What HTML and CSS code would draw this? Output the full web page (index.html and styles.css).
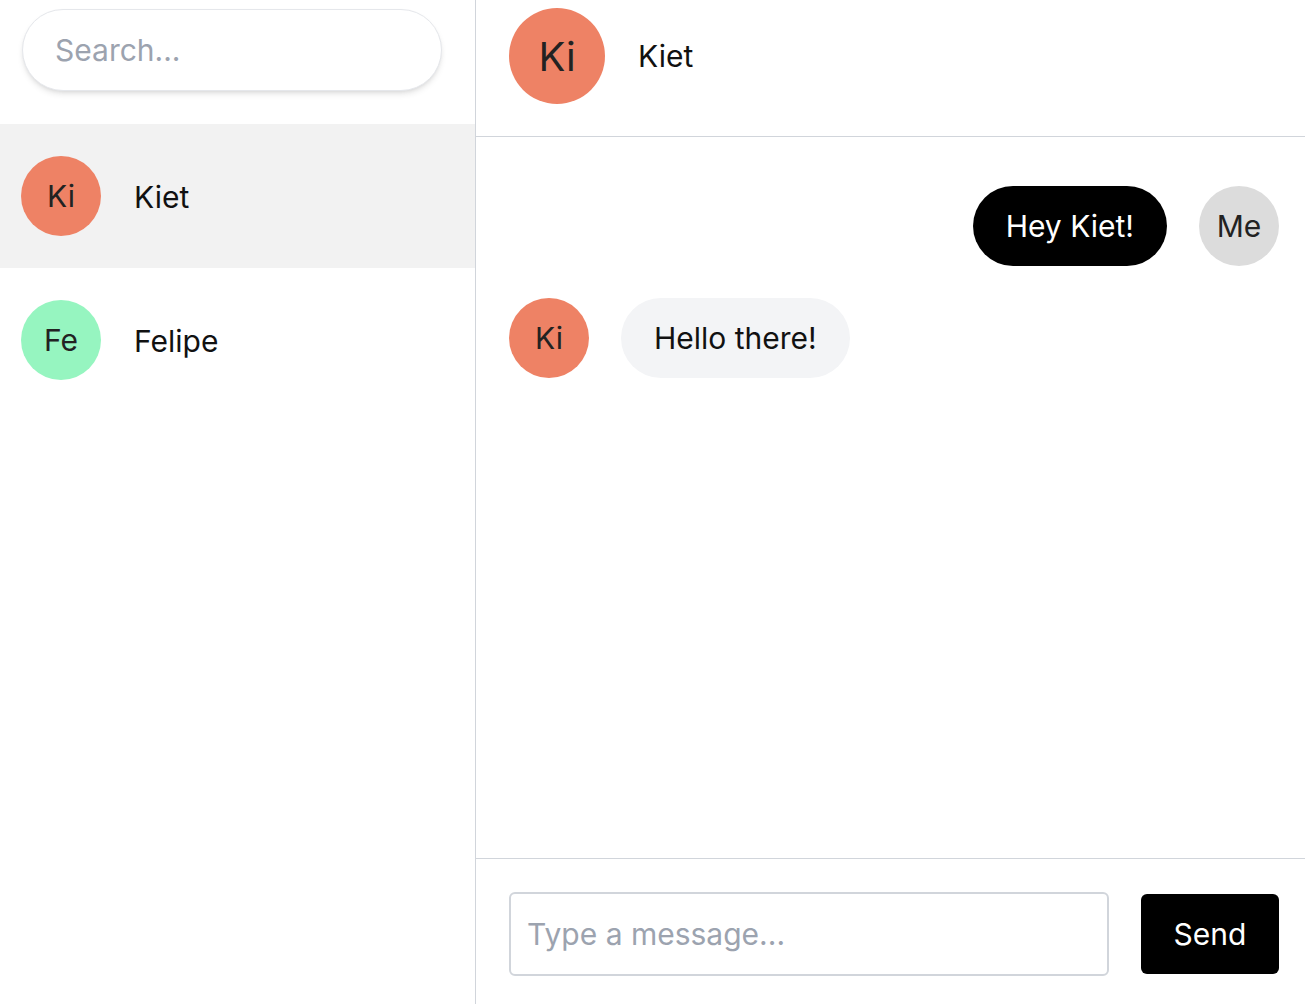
FILE: index.html
```html
<!DOCTYPE html>
<html lang="en">
<head>
<meta charset="utf-8">
<title>Chat</title>
<link rel="stylesheet" href="styles.css">
</head>
<body>
<div class="app">
  <aside class="sidebar">
    <div class="search-wrap">
      <input class="search" type="text" placeholder="Search...">
    </div>
    <ul class="contacts">
      <li class="contact active">
        <span class="avatar avatar-ki">Ki</span>
        <span class="contact-name">Kiet</span>
      </li>
      <li class="contact">
        <span class="avatar avatar-fe">Fe</span>
        <span class="contact-name">Felipe</span>
      </li>
    </ul>
  </aside>
  <main class="chat">
    <header class="chat-header">
      <span class="avatar avatar-ki avatar-lg">Ki</span>
      <span class="chat-title">Kiet</span>
    </header>
    <section class="messages">
      <div class="msg msg-out">
        <div class="bubble bubble-out">Hey Kiet!</div>
        <span class="avatar avatar-me">Me</span>
      </div>
      <div class="msg msg-in">
        <span class="avatar avatar-ki">Ki</span>
        <div class="bubble bubble-in">Hello there!</div>
      </div>
    </section>
    <footer class="composer">
      <input class="composer-input" type="text" placeholder="Type a message...">
      <button class="send" type="button">Send</button>
    </footer>
  </main>
</div>
</body>
</html>
```
FILE: styles.css
```css
* { box-sizing: border-box; }
html, body { margin: 0; padding: 0; height: 100%; }
body {
  font-family: Inter, "Noto Sans", "Liberation Sans", sans-serif;
  font-size: 30px;
  color: #111;
  background: #fff;
}
.app {
  display: flex;
  height: 100vh;
}
.sidebar {
  width: 476px;
  flex: none;
  border-right: 1px solid #d1d5db;
  display: flex;
  flex-direction: column;
}
.search-wrap {
  padding: 9px 33px 33px 22px;
}
.search {
  display: block;
  width: 420px;
  height: 82px;
  border: 1px solid #e5e7eb;
  border-radius: 41px;
  padding: 0 32px;
  font: inherit;
  font-size: 30px;
  color: #111;
  background: #fff;
  box-shadow: 0 4px 6px -1px rgba(0,0,0,0.1), 0 2px 4px -2px rgba(0,0,0,0.1);
  outline: none;
}
.search::placeholder { color: #9ca3af; }
.contacts {
  list-style: none;
  margin: 0;
  padding: 0;
}
.contact {
  height: 144px;
  display: flex;
  align-items: center;
  gap: 33px;
  padding: 2px 21px 0;
}
.contact.active { background: #f2f2f2; }
.contact .avatar { margin-top: -2px; }
.avatar {
  width: 80px;
  height: 80px;
  flex: none;
  border-radius: 50%;
  display: flex;
  align-items: center;
  justify-content: center;
  font-size: 30px;
  color: #222;
}
.avatar-ki { background: #ee8265; }
.avatar-fe { background: #96f5c0; }
.avatar-me { background: #dcdcdc; }
.avatar-lg {
  width: 96px;
  height: 96px;
  font-size: 40px;
}
.chat {
  flex: 1;
  display: flex;
  flex-direction: column;
  min-width: 0;
}
.chat-header {
  display: flex;
  align-items: center;
  gap: 33px;
  padding: 8px 33px 32px 33px;
  border-bottom: 1px solid #d1d5db;
}
.messages {
  flex: 1;
  display: flex;
  flex-direction: column;
  gap: 32px;
  padding: 49px 26px 0 33px;
}
.msg {
  display: flex;
  align-items: center;
  gap: 32px;
}
.msg-out { justify-content: flex-end; }
.bubble {
  height: 80px;
  line-height: 80px;
  padding: 0 33px;
  border-radius: 40px;
  font-size: 30px;
}
.bubble-out { background: #000; color: #fff; }
.bubble-in { background: #f3f4f6; color: #111; }
.composer {
  display: flex;
  align-items: center;
  gap: 32px;
  padding: 33px 26px 28px 33px;
  border-top: 1px solid #d1d5db;
}
.composer-input {
  flex: 1;
  height: 84px;
  border: 2px solid #d1d5db;
  border-radius: 6px;
  padding: 0 16px;
  font: inherit;
  font-size: 30px;
  outline: none;
  min-width: 0;
}
.composer-input::placeholder { color: #9ca3af; }
.send {
  width: 138px;
  height: 80px;
  border: none;
  border-radius: 6px;
  background: #000;
  color: #fff;
  font: inherit;
  font-size: 30px;
  padding: 0;
}
```
